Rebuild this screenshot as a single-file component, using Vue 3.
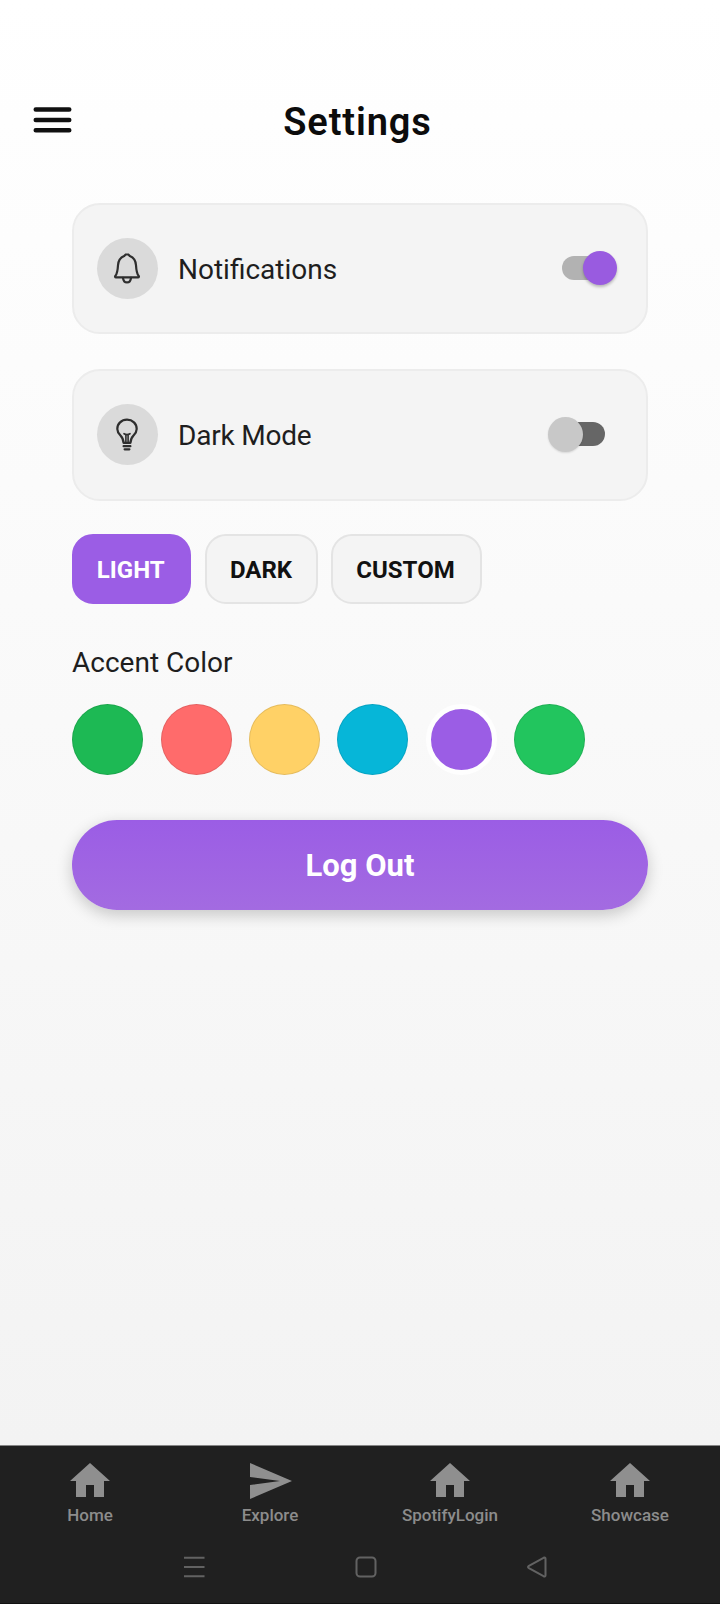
<script setup>
import { ref } from 'vue'

const notifications = ref(true)
const darkMode = ref(false)
const theme = ref('light')
const accent = ref(4)
const themes = ['light', 'dark', 'custom']
const accents = ['green', 'coral', 'yellow', 'cyan', 'purple', 'emerald']
const house = 'M10 20v-6h4v6h5v-8h3L12 3 2 12h3v8z'
const plane = 'M2.01 21L23 12 2.01 3 2 10l15 2-15 2z'
const tabs = [
  { name: 'Home', icon: house },
  { name: 'Explore', icon: plane },
  { name: 'SpotifyLogin', icon: house },
  { name: 'Showcase', icon: house }
]
</script>

<template>
  <div class="screen">
    <header class="header">
      <svg class="burger" width="40" height="28" viewBox="0 0 40 28">
        <path d="M3.800 3.500h33.400M3.800 14h33.400M3.800 24.300h33.400" />
      </svg>
      <h1 class="title">Settings</h1>
    </header>

    <main class="content">
      <section class="card">
        <span class="badge">
          <svg width="61" height="61" viewBox="0 0 61 61">
            <path d="M30 16.200c-1.200 0-2 .9-2.800 1.800-4 1.600-5.900 4.600-6.200 9.200-.3 5.200-.8 8.300-2.500 10.400-.8 1-.4 1.700.5 1.700h22c.9 0 1.300-.7.5-1.700-1.700-2.100-2.200-5.200-2.500-10.400-.3-4.600-2.200-7.600-6.200-9.200-.8-.9-1.600-1.800-2.800-1.800z" />
            <path d="M26 39.800c.3 3.100 1.800 4.600 4 4.600s3.700-1.500 4-4.600" />
          </svg>
        </span>
        <span class="label">Notifications</span>
        <button class="switch on" aria-label="Notifications" @click="notifications = !notifications"><i></i></button>
      </section>

      <section class="card second">
        <span class="badge">
          <svg width="61" height="61" viewBox="0 0 61 61">
            <path d="M26.500 38.800c0-3.600-.9-5.100-3-7.400-2-2.100-3.200-4-3.200-6.500 0-5.100 4.100-9.200 9.700-9.200s9.700 4.100 9.700 9.200c0 2.500-1.200 4.400-3.200 6.500-2.100 2.300-3 3.800-3 7.400z" />
            <path class="fine" d="M27 29.700c1.900 1.200 4.100 1.200 6 0M28.900 30.700v8M31.100 30.700v8" />
            <path d="M26.600 42.200h6.800M27.600 45.300h4.800" />
          </svg>
        </span>
        <span class="label">Dark Mode</span>
        <button class="switch off" aria-label="Dark mode" @click="darkMode = !darkMode"><i></i></button>
      </section>

      <div class="themes">
        <button v-for="t in themes" :key="t" class="chip" :class="[t, { active: theme === t }]" @click="theme = t">{{ t.toUpperCase() }}</button>
      </div>

      <h2 class="subtitle">Accent Color</h2>
      <div class="swatches">
        <button v-for="(a, i) in accents" :key="a" class="swatch" :class="[a, { selected: accent === i }]" :aria-label="a" @click="accent = i"></button>
      </div>

      <button class="logout"><span>Log Out</span></button>
    </main>

    <footer class="bottom">
      <nav class="tabs">
        <a v-for="t in tabs" :key="t.name" class="tab">
          <svg width="48" height="48" viewBox="0 0 24 24"><path :d="t.icon" /></svg>
          <span>{{ t.name }}</span>
        </a>
      </nav>
      <div class="system">
        <svg width="24" height="24" viewBox="0 0 24 24"><path d="M2 2.800h20.500M2 12h20.500M2 21.200h20.500" /></svg>
        <svg width="24" height="24" viewBox="0 0 24 24"><rect x="2.500" y="2.500" width="19" height="19" rx="3.500" /></svg>
        <svg width="24" height="24" viewBox="0 0 24 24"><path d="M2.900 10.800L17.500 2.800q2-.8 2 1v16.400q0 1.800-2 1L2.900 13.200q-1.800-1.200 0-2.400z" /></svg>
      </div>
    </footer>
  </div>
</template>

<style>
body {
  margin: 0;
}
</style>

<style scoped>
.screen {
  width: 720px;
  height: 1604px;
  display: flex;
  flex-direction: column;
  overflow: hidden;
  background: linear-gradient(#ffffff 0, #f3f3f3 1445px);
  font-family: Roboto, "Liberation Sans", sans-serif;
  color: #1e1e1e;
}
button {
  font-family: inherit;
  border: 0;
  padding: 0;
  flex: none;
}
.header {
  display: grid;
  grid-template-columns: 72px 1fr 72px;
  padding-top: 98px;
  height: 104.500px;
}
.burger {
  margin: 8px 0 0 32px;
  fill: none;
  stroke: #101010;
  stroke-width: 4.600;
  stroke-linecap: round;
}
.title {
  margin: 0;
  padding: 0 5px 0 0;
  text-align: center;
  font-size: 38px;
  line-height: 48px;
  font-weight: 600;
  letter-spacing: .9px;
  color: #0c0c0c;
}
.content {
  flex: 1;
  padding: 0 72px;
}
.card {
  box-sizing: border-box;
  height: 131.500px;
  display: flex;
  align-items: center;
  padding: 0 23px;
  border: 2px solid #ececec;
  border-radius: 28px;
  background: #f4f4f4;
}
.card.second {
  margin-top: 35px;
  padding-bottom: 1px;
}
.badge {
  width: 61px;
  height: 61px;
  border-radius: 50%;
  background: #dadada;
}
.badge svg {
  display: block;
  fill: none;
  stroke: #2e2e2e;
  stroke-width: 2.200;
  stroke-linecap: round;
  stroke-linejoin: round;
}
.badge .fine {
  stroke-width: 1.600;
}
.label {
  flex: 1;
  margin-left: 20px;
  padding-top: 3px;
  font-size: 28px;
  line-height: 36px;
}
.second .label {
  letter-spacing: -.2px;
}
.switch {
  width: 44px;
  height: 24px;
  display: flex;
  align-items: center;
  border-radius: 12px;
}
.switch i {
  flex: none;
  width: 34px;
  height: 34px;
  border-radius: 50%;
}
.switch.on {
  margin-right: 17px;
  background: #b2b2b2;
}
.switch.on i {
  margin-left: 21px;
  background: #995be0;
  box-shadow: 0 2px 3px rgba(0, 0, 0, .25);
}
.switch.off {
  margin-right: 18px;
  background: #666;
}
.switch.off i {
  width: 35px;
  height: 35px;
  margin-left: -13px;
  background: #c8c8c8;
  box-shadow: 0 1px 2px rgba(0, 0, 0, .12);
}
.themes {
  display: flex;
  gap: 13px;
  margin-top: 33px;
}
.chip {
  box-sizing: border-box;
  height: 70px;
  padding: 2px 1px 0 0;
  border: 2px solid #e4e4e4;
  border-radius: 21px;
  background: #f4f4f4;
  color: #111;
  font-size: 24px;
  font-weight: 700;
}
.chip.light {
  width: 118.500px;
  margin-right: 1.500px;
}
.chip.dark {
  width: 113px;
}
.chip.custom {
  width: 151px;
  padding-right: 2px;
}
.chip.active {
  border-color: #9b5de5;
  background: #9b5de5;
  color: #fff;
}
.subtitle {
  margin: 41px 0 0;
  font-size: 28px;
  line-height: 36px;
  font-weight: 400;
}
.swatches {
  display: flex;
  gap: 17.400px;
  margin: 23px 0 0 .2px;
}
.swatch {
  box-sizing: border-box;
  width: 71px;
  height: 71px;
  border: 1px solid rgba(0, 0, 0, .1);
  border-radius: 50%;
}
.green { background-color: #1db954; }
.coral { background-color: #ff6b6b; }
.yellow { background-color: #ffd166; }
.cyan { background-color: #06b6d8; }
.purple { background-color: #9b5de5; }
.emerald { background-color: #22c55e; }
.swatch.selected {
  border: 5px solid #fefefe;
}
.logout {
  display: block;
  width: 576px;
  height: 90px;
  margin-top: 45px;
  padding-top: 2px;
  border-radius: 45px;
  background: linear-gradient(#9b5de5, #a36be1);
  box-shadow: 0 5px 16px rgba(0, 0, 0, .2);
  color: #fff;
  font-size: 31px;
  line-height: 88px;
  font-weight: 700;
}
.bottom {
  box-sizing: border-box;
  height: 159px;
  border-top: 1px solid #858585;
  border-bottom: 1px solid #111;
  background: #202020;
}
.tabs {
  display: grid;
  grid-template-columns: repeat(4, 1fr);
  padding-top: 11px;
}
.tab {
  display: flex;
  flex-direction: column;
  align-items: center;
  color: #8c8c8c;
  font-size: 17px;
  line-height: 20px;
  font-weight: 500;
}
.tab svg {
  fill: #8f8f8f;
}
.system {
  display: flex;
  gap: 148px;
  margin: 30px 0 0 182px;
}
.system svg {
  fill: none;
  stroke: #626262;
  stroke-width: 2;
}
</style>
